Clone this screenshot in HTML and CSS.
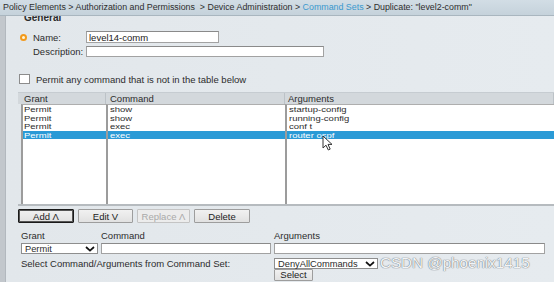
FILE: index.html
```html
<!DOCTYPE html>
<html lang="en">

<head>
  <meta charset="UTF-8">
  <meta name="viewport" content="width=device-width, initial-scale=1.0">
  <title>Duplicate: "level2-comm"</title>
  <link rel="stylesheet" href="styles.css">
</head>

<body>
  <div class="crumbs">
    Policy Elements &gt; Authorization and Permissions &nbsp;&gt; Device Administration &gt;
    <span class="link">Command Sets</span> &gt; Duplicate: "level2-comm"
  </div>

  <div class="main">
    <div class="rail"></div>
    <div class="panel">
      <div class="legend">General</div>

      <!-- name / description -->
      <div class="field">
        <span class="req"></span>
        <label class="lbl">Name:</label>
        <input class="txt name-in" type="text" value="level14-comm">
      </div>
      <div class="field field-desc">
        <span class="req req-none"></span>
        <label class="lbl">Description:</label>
        <input class="txt desc-in" type="text" value="">
      </div>

      <div class="check-row">
        <span class="check"></span>
        <span>Permit any command that is not in the table below</span>
      </div>

      <!-- command table -->
      <div class="table">
        <div class="thead">
          <div class="th th-grant">Grant</div>
          <div class="th th-cmd">Command</div>
          <div class="th th-args">Arguments</div>
        </div>
        <div class="tbody">
          <div class="col col-grant">
            <div class="row"><span>Permit</span></div>
            <div class="row"><span>Permit</span></div>
            <div class="row"><span>Permit</span></div>
            <div class="row sel"><span>Permit</span></div>
          </div>
          <div class="col col-cmd">
            <div class="row"><span>show</span></div>
            <div class="row"><span>show</span></div>
            <div class="row"><span>exec</span></div>
            <div class="row sel"><span>exec</span></div>
          </div>
          <div class="col col-args">
            <div class="row"><span>startup-config</span></div>
            <div class="row"><span>running-config</span></div>
            <div class="row"><span>conf t</span></div>
            <div class="row sel"><span>router ospf</span></div>
          </div>
        </div>
      </div>

      <div class="actions">
        <button class="btn btn-focus">Add &Lambda;</button>
        <button class="btn btn-edit">Edit V</button>
        <button class="btn btn-off" disabled>Replace &Lambda;</button>
        <button class="btn">Delete</button>
      </div>

      <!-- new entry -->
      <div class="entry">
        <div class="cap">Grant</div>
        <div class="cap">Command</div>
        <div class="cap">Arguments</div>

        <div class="select sel-grant">
          <span>Permit</span>
          <svg width="10" height="6" viewBox="0 0 10 6"><path d="M1 1 L5 4.6 L9 1" fill="none" stroke="#111" stroke-width="1.7"/></svg>
        </div>
        <input class="txt cmd-in" type="text" value="">
        <input class="txt args-in" type="text" value="">

        <div class="pick-label">Select Command/Arguments from Command Set:</div>
        <div class="pick">
          <div class="select sel-set">
            <span>DenyAllCommands</span>
            <svg width="10" height="6" viewBox="0 0 10 6"><path d="M1 1 L5 4.6 L9 1" fill="none" stroke="#111" stroke-width="1.7"/></svg>
          </div>
          <button class="btn btn-select">Select</button>
        </div>
      </div>
    </div>
  </div>

  <!-- pointer over the selected row -->
  <svg class="cursor" width="12" height="16" viewBox="0 0 12 16">
    <path d="M1 1 L1 13 L4 10.2 L6.3 15 L8.2 14.1 L6 9.4 L10 9.4 Z" fill="#fff" stroke="#333" stroke-width="1" stroke-linejoin="round"/>
  </svg>

  <div class="mark">CSDN @phoenix1415</div>
</body>

</html>
```

FILE: styles.css
```css
body {
  margin: 0;
  font-family: "Liberation Sans", Arial, sans-serif;
  font-size: 9.5px;
  color: #2c2c2c;
  background: #e3e8ec;
  overflow: hidden;
}
.crumbs {
  height: 15px;
  line-height: 15px;
  padding-left: 3px;
  font-size: 8.85px;
  color: #2e2e2e;
  white-space: nowrap;
  background: linear-gradient(#d2dde5, #c5d2db);
  border-bottom: 1px solid #a9b6bf;
}
.crumbs .link {
  color: #3a99cf;
}
.main {
  display: flex;
  height: 266px;
}
.rail {
  width: 5px;
  background: #c2c7cc;
  border-right: 1px solid #b2b8be;
}
.panel {
  flex: 1;
  overflow: hidden;
  background: linear-gradient(90deg, #e2e7eb, #e6ebef);
}
.legend {
  font-weight: bold;
  font-size: 10px;
  line-height: 8px;
  margin: -2px 0 0 18px;
}

/* name / description */
.field {
  display: flex;
  align-items: center;
  height: 12px;
  margin: 9px 0 0 14px;
}
.field-desc {
  height: 11px;
  margin-top: 3px;
}
.req {
  width: 7px;
  height: 7px;
  box-sizing: border-box;
  border-radius: 50%;
  border: 2px solid #f29a1d;
  background: #fff6d8;
  margin-right: 6px;
}
.req-none {
  border: 0;
  background: none;
}
.lbl {
  width: 53px;
}
.txt {
  box-sizing: border-box;
  height: 100%;
  margin: 0;
  padding: 0 2px;
  border: 1px solid #a2a2a2;
  border-top-color: #8a8a8a;
  background: #fff;
  font: inherit;
  color: #222;
  outline: none;
}
.name-in {
  width: 133px;
}
.desc-in {
  width: 238px;
}

.check-row {
  display: flex;
  align-items: center;
  gap: 6px;
  height: 10px;
  margin: 17px 0 0 13px;
}
.check {
  width: 11px;
  height: 10px;
  box-sizing: border-box;
  border: 1px solid #8c8c8c;
  background: #fff;
}

/* table */
.table {
  margin: 8px 0 0 12px;
}
.thead {
  display: flex;
  height: 11px;
  line-height: 11px;
  background: #d3d8dc;
  border-top: 1px solid #c6ccd1;
}
.th {
  box-sizing: border-box;
  border-right: 1px solid #bcc2c7;
}
.th-grant {
  width: 88px;
  padding-left: 6px;
}
.th-cmd {
  width: 179px;
  padding-left: 4px;
}
.th-args {
  flex: 1;
  padding-left: 3px;
}
.tbody {
  display: flex;
  height: 100px;
  padding-left: 3px;
  border-bottom: 2px solid #b6bbbf;
}
.col {
  box-sizing: border-box;
  background: #fff;
  border-left: 2px solid #9c9c9c;
  border-top: 1px solid #aeaeae;
}
.col-grant {
  width: 85px;
}
.col-cmd {
  width: 179px;
}
.col-args {
  flex: 1;
}
.row {
  height: 8.5px;
  line-height: 8.5px;
  padding-left: 1px;
  white-space: nowrap;
}
/* rows in the list are packed tighter than the text height */
.row span {
  display: inline-block;
  vertical-align: top;
  transform: scaleY(0.82);
  transform-origin: 0 55%;
}
.col-cmd .row,
.col-args .row {
  padding-left: 2px;
}
.row.sel {
  background: #2a9ad6;
  color: #fff;
}

/* buttons */
.actions {
  display: flex;
  gap: 4px;
  margin: 3px 0 0 12px;
}
.btn {
  box-sizing: border-box;
  height: 14px;
  margin: 0;
  padding: 0;
  font: inherit;
  color: #222;
  background: linear-gradient(#f1f1f1, #e1e1e1);
  border: 1px solid #9d9d9d;
  border-radius: 1px;
}
.actions .btn {
  width: 56px;
}
.actions .btn-edit {
  width: 55px;
}
.actions .btn-off {
  width: 53px;
  color: #a9a9a9;
  border-color: #c4c4c4;
  background: #ececec;
}
.btn-focus {
  border: 1px solid #1a1a1a;
  box-shadow: inset 0 0 0 1px #555;
}

/* new entry form */
.entry {
  display: grid;
  grid-template-columns: 80px 173px 271px;
  grid-template-rows: 9px 11px auto;
  row-gap: 3px;
  margin: 8px 0 0 15px;
}
.cap {
  line-height: 9px;
}
.select {
  box-sizing: border-box;
  display: flex;
  align-items: center;
  justify-content: space-between;
  height: 11px;
  padding: 0 2px 0 3px;
  background: #fff;
  border: 1px solid #8e8e8e;
  font-size: 9.3px;
}
.sel-grant {
  width: 77px;
}
.cmd-in {
  width: 170px;
}
.args-in {
  width: 271px;
}
.pick-label {
  grid-column: 1 / 3;
  line-height: 11px;
  margin-top: 1px;
}
.pick {
  margin-top: 1px;
}
.sel-set {
  width: 104px;
}
.btn-select {
  display: block;
  width: 39px;
  height: 12px;
  line-height: 10px;
}

/* overlays */
.cursor {
  position: absolute;
  left: 322px;
  top: 135px;
}
.mark {
  position: absolute;
  left: 380px;
  top: 254px;
  font-size: 15.2px;
  line-height: 18px;
  color: #f2f4f6;
  text-shadow: 0 0 1px #6f757c, 0 0 1px #6f757c;
  white-space: nowrap;
}
```
